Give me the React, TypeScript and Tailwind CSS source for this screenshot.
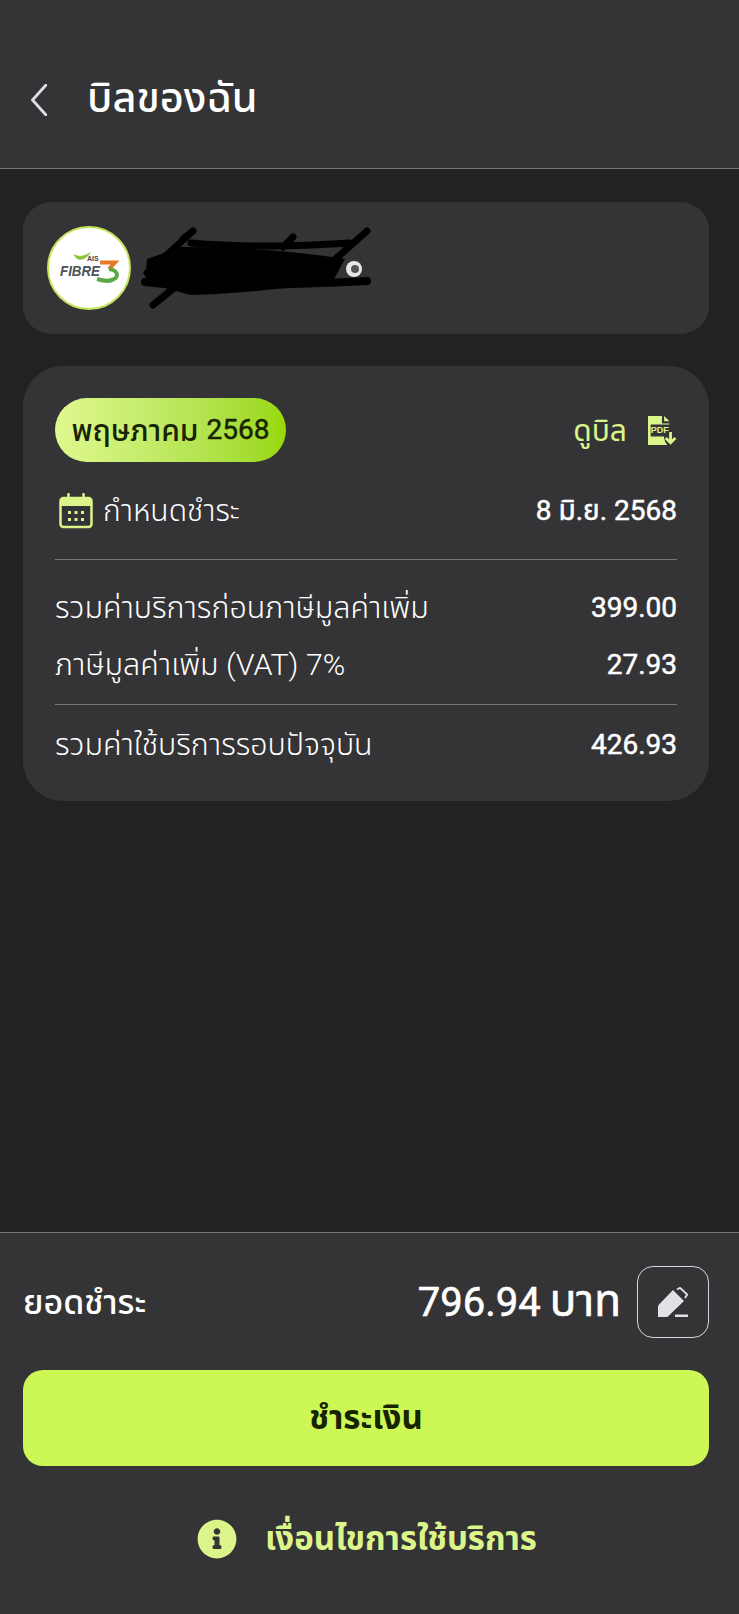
import { FaInfoCircle } from "react-icons/fa";

const font = { fontFamily: '"Roboto", "Noto Sans", "Noto Sans Thai", "Liberation Sans", sans-serif' };

function FibreLogo() {
  return (
    <div className="flex h-[84px] w-[84px] shrink-0 items-center justify-center rounded-full border-2 border-[#c3e65a] bg-white">
      <svg viewBox="0 0 80 80" className="h-[80px] w-[80px]">
        <path d="M24 26 C30 29 36 28 42 24 C38 31 31 34 27 30 Z" fill="#8cc63f" />
        <text x="38" y="33" fontSize="7" fontWeight="700" fill="#444" fontFamily="Liberation Sans">AIS</text>
        <text x="11" y="48" fontSize="14" fontStyle="italic" fontWeight="700" fill="#4a5258" fontFamily="Liberation Sans" textLength="40" lengthAdjust="spacingAndGlyphs">FIBRE</text>
        <path d="M51 34.5 H66 L60 41" fill="none" stroke="#e8792b" strokeWidth="4" />
        <path d="M60 41 C69 42 70 49 65 51 C60 54 55 53 48 51" fill="none" stroke="#58a845" strokeWidth="4" />
      </svg>
    </div>
  );
}

// scribbled-out customer name
function Scribble() {
  return (
    <svg viewBox="0 0 240 90" className="ml-[10px] h-[90px] w-[240px] shrink-0">
      <circle cx="213" cy="46" r="8" fill="#e8e8e8" />
      <circle cx="214" cy="46" r="4" fill="#555" />
      <path d="M4 59 Q60 66 226 58" stroke="#000" strokeWidth="8" strokeLinecap="round" fill="none" />
      <path d="M42 16 L52 8 L6 50 M50 20 Q120 26 208 20 M12 82 L54 48 M190 40 L226 8 M142 24 L152 14" stroke="#000" strokeWidth="7" strokeLinecap="round" strokeLinejoin="round" fill="none" />
      <path d="M6 36 L40 24 Q130 24 204 36 L192 58 Q120 70 50 72 L4 60 Z" fill="#000" />
    </svg>
  );
}

function CalendarIcon() {
  return (
    <svg viewBox="0 0 34 36" className="h-[36px] w-[34px]" fill="none">
      <rect x="1.5" y="5" width="31" height="29" rx="3" stroke="#dcf58a" strokeWidth="2.5" />
      <path d="M1.5 8 Q1.5 5 4.5 5 H29.5 Q32.5 5 32.5 8 V13 H1.5 Z" fill="#dcf58a" />
      <path d="M9.5 1 V8 M24.5 1 V8" stroke="#dcf58a" strokeWidth="2.5" strokeLinecap="round" />
      <g fill="#dcf58a">
        <rect x="9" y="18" width="3" height="3" /><rect x="15.5" y="18" width="3" height="3" /><rect x="22" y="18" width="3" height="3" />
        <rect x="9" y="25" width="3" height="3" /><rect x="15.5" y="25" width="3" height="3" /><rect x="22" y="25" width="3" height="3" />
      </g>
    </svg>
  );
}

function PdfIcon() {
  return (
    <svg viewBox="0 0 27 27" className="h-[29px] w-[29px]">
      <path d="M0 0 H13 V7 H20 V8 H2.5 V19 H0 Z M15 0 L20 5 H15 Z M0 19 H15 V21 Q15.5 24 18 27 H0 Z" fill="#dcf58a" />
      <text x="2.5" y="15.5" fontSize="8.5" fontWeight="700" fill="#dcf58a" fontFamily="Liberation Sans">PDF</text>
      <path d="M21 15 V25 M16.5 20.5 L21 25 L25.5 20.5" fill="none" stroke="#dcf58a" strokeWidth="2.6" />
    </svg>
  );
}

function EditIcon() {
  return (
    <svg viewBox="0 0 30 30" className="h-[30px] w-[30px]">
      <path d="M0 30 V20 Q0 18.5 1 17.5 L15 3 L26 14 L11 28.5 Q10 30 8 30 Z" fill="#e1e2e6" />
      <path d="M19 2.5 L22 0.8 L29.2 7.5 L27 11" fill="none" stroke="#e1e2e6" strokeWidth="1.8" />
      <rect x="17" y="27.5" width="13" height="2.5" fill="#e1e2e6" />
    </svg>
  );
}

function Row({ label, value }: { label: string; value: string }) {
  return (
    <div className="flex items-center justify-between leading-[40px] text-white">
      <span className="text-[30.4px] font-light">{label}</span>
      <span className="text-[28px] [-webkit-text-stroke:0.5px]">{value}</span>
    </div>
  );
}

export default function App() {
  return (
    <div style={font} className="flex h-[1614px] w-[739px] flex-col bg-[#222224] text-white">
      <header className="flex h-[169px] shrink-0 items-center border-b border-[#77777a] bg-[#343437] pt-[50px] pb-[23px] pl-[31px]">
        <svg viewBox="0 0 16 32" className="mt-[4px] h-[32px] w-[16px]" fill="none">
          <path d="M15 1 L1.5 16 L15 31" stroke="#dfe0e4" strokeWidth="2.8" strokeLinecap="round" strokeLinejoin="round" />
        </svg>
        <h1 className="ml-[40px] text-[41.5px] leading-[46px] font-medium">บิลของฉัน</h1>
      </header>

      <main className="flex flex-1 flex-col gap-[32px] pt-[33px] pr-[30px] pl-[23px]">
        <section className="flex h-[132px] items-center rounded-[28px] bg-[#343437] pl-[24px]">
          <FibreLogo />
          <Scribble />
        </section>

        <section className="rounded-[40px] bg-[#343437] px-[32px] pt-[32px] pb-[36px]">
          <div className="flex items-center justify-between">
            <span className="flex h-[64px] w-[231px] items-center justify-center gap-[8px] rounded-full bg-gradient-to-r from-[#e0f88f] to-[#99d800] text-[30px] font-medium text-[#172400]">
              พฤษภาคม <span className="text-[28px] font-normal [-webkit-text-stroke:0.5px]">2568</span>
            </span>
            <a className="flex items-center gap-[21px] text-[30px] text-[#dcf58a]">
              ดูบิล
              <PdfIcon />
            </a>
          </div>

          <div className="mt-[29px] flex items-center justify-between pb-[28px] leading-[40px]">
            <span className="flex items-center gap-[10px] pl-[4px] text-[30px] font-light">
              <CalendarIcon />
              กำหนดชำระ
            </span>
            <span className="text-[28px] [-webkit-text-stroke:0.5px]">8 มิ.ย. 2568</span>
          </div>

          <div className="flex flex-col gap-[16px] border-t border-b border-[#77777a] pt-[28px] pb-[19px]">
            <Row label="รวมค่าบริการก่อนภาษีมูลค่าเพิ่ม" value="399.00" />
            <div className="mt-[1px]">
              <Row label="ภาษีมูลค่าเพิ่ม (VAT) 7%" value="27.93" />
            </div>
          </div>

          <div className="mt-[20px]">
            <Row label="รวมค่าใช้บริการรอบปัจจุบัน" value="426.93" />
          </div>
        </section>
      </main>

      <footer className="flex h-[382px] shrink-0 flex-col border-t border-[#77777a] bg-[#343437] pt-[33px] pr-[30px] pl-[23px]">
        <div className="flex items-center justify-between">
          <span className="text-[34px] font-medium">ยอดชำระ</span>
          <div className="flex items-center gap-[16px]">
            <span className="flex items-baseline gap-[9px] pb-[3px] text-[40px] [-webkit-text-stroke:0.6px]">
              796.94 <span className="text-[44px]">บาท</span>
            </span>
            <button className="flex h-[72px] w-[72px] items-center justify-center rounded-[16px] border border-[#d5d6da]">
              <EditIcon />
            </button>
          </div>
        </div>

        <button className="mt-[32px] flex h-[96px] items-center justify-center rounded-[20px] bg-[#ccf755] text-[33px] font-bold text-[#172400]">
          ชำระเงิน
        </button>

        <div className="mt-[48px] flex items-center justify-center gap-[28px] pl-[2px] text-[33px] font-bold text-[#dcf58a]">
          <FaInfoCircle className="h-[40px] w-[40px]" />
          เงื่อนไขการใช้บริการ
        </div>
      </footer>
    </div>
  );
}
